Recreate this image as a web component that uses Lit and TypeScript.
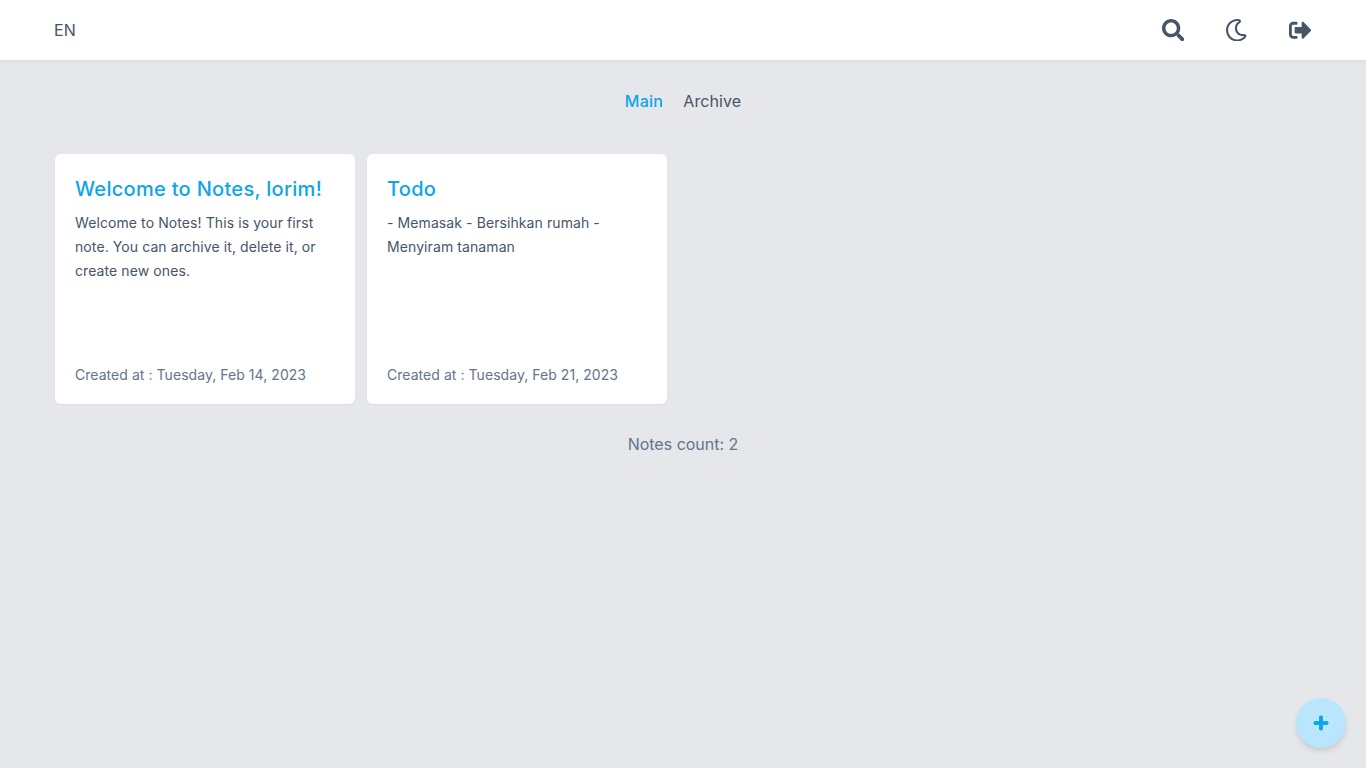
import { LitElement, css, html, svg } from "lit";
import { customElement } from "lit/decorators.js";

const notes = [
  {
    title: "Welcome to Notes, lorim!",
    body: "Welcome to Notes! This is your first note. You can archive it, delete it, or create new ones.",
    date: "Created at : Tuesday, Feb 14, 2023",
  },
  {
    title: "Todo",
    body: "- Memasak - Bersihkan rumah - Menyiram tanaman",
    date: "Created at : Tuesday, Feb 21, 2023",
  },
];

const searchIcon = svg`<path d="M505 442.7L405.3 343c-4.5-4.5-10.6-7-17-7H372c27.6-35.3 44-79.7 44-128C416 93.1 322.9 0 208 0S0 93.1 0 208s93.1 208 208 208c48.3 0 92.7-16.4 128-44v16.3c0 6.4 2.5 12.5 7 17l99.7 99.7c9.4 9.4 24.6 9.4 33.9 0l28.3-28.3c9.4-9.4 9.4-24.6.1-34zM208 336c-70.7 0-128-57.2-128-128 0-70.7 57.2-128 128-128 70.7 0 128 57.2 128 128 0 70.7-57.2 128-128 128z"/>`;
const moonIcon = svg`<path d="M279.1 512c78.8 0 151-35.8 198.8-94.8 28.3-34.8-2.6-85.7-46.2-77.4-82.4 15.7-158.3-47.3-158.3-130.8 0-48.4 26.1-92.3 67.4-115.8 38.8-22.1 29-80.8-15-88.9A258 258 0 0 0 279.1 0c-141.4 0-256 114.6-256 256 0 141.4 114.6 256 256 256zm0-464c13 0 25.7 1.2 38 3.5-54.8 31.2-91.7 90-91.7 157.5 0 113.9 103.7 199.2 215.3 178C402.6 434 344.4 464 279.1 464c-114.9 0-208-93.1-208-208s93.1-208 208-208z"/>`;
const signOutIcon = svg`<path d="M497 273L329 441c-15 15-41 4.5-41-17v-96H152c-13.3 0-24-10.7-24-24v-96c0-13.3 10.7-24 24-24h136V88c0-21.4 25.9-32 41-17l168 168c9.3 9.4 9.3 24.6 0 34zM192 436v-40c0-6.6-5.4-12-12-12H96c-17.7 0-32-14.3-32-32V160c0-17.7 14.3-32 32-32h84c6.6 0 12-5.4 12-12V76c0-6.6-5.4-12-12-12H96c-53 0-96 43-96 96v192c0 53 43 96 96 96h84c6.6 0 12-5.4 12-12z"/>`;
const plusIcon = svg`<path d="M416 208H272V64c0-17.67-14.33-32-32-32h-32c-17.67 0-32 14.33-32 32v144H32c-17.67 0-32 14.33-32 32v32c0 17.67 14.33 32 32 32h144v144c0 17.67 14.33 32 32 32h32c17.67 0 32-14.33 32-32V304h144c17.67 0 32-14.33 32-32v-32c0-17.67-14.33-32-32-32z"/>`;

@customElement("app-root")
export class AppRoot extends LitElement {
  static styles = css`
    :host {
      display: block;
      position: relative;
      min-height: 100vh;
      background: #e5e7eb;
      color: #475569;
      font-family: Inter, "Noto Sans", sans-serif;
    }

    .header {
      display: flex;
      align-items: center;
      justify-content: space-between;
      height: 60px;
      padding: 0 54px;
      background: #fff;
      box-shadow: 0 1px 4px rgba(0, 0, 0, 0.06);
    }

    .lang {
      font-size: 16px;
      letter-spacing: 0.2px;
    }

    .actions {
      display: flex;
      align-items: center;
      gap: 41px;
      padding-right: 1px;
    }

    .actions svg {
      display: block;
      width: 22.5px;
      height: 22.5px;
      fill: currentColor;
    }

    .tabs {
      display: flex;
      justify-content: center;
      gap: 20px;
      padding-top: 31px;
      font-size: 16px;
      line-height: 20px;
      letter-spacing: 0.1px;
    }

    .tabs .active {
      color: #0ea5e9;
      font-weight: 500;
      letter-spacing: 0.3px;
    }

    .notes {
      display: flex;
      flex-wrap: wrap;
      gap: 12px;
      padding: 43px 55px 0;
    }

    .note {
      display: flex;
      flex-direction: column;
      box-sizing: border-box;
      width: 300px;
      height: 250px;
      padding: 20px;
      background: #fff;
      border-radius: 6px;
      box-shadow: 0 1px 2px rgba(0, 0, 0, 0.05);
    }

    .note h2 {
      margin: 0 0 7px;
      color: #0ea5e9;
      font-size: 20px;
      font-weight: 500;
      line-height: 30px;
      letter-spacing: 0.3px;
    }

    .note p {
      flex: 1;
      margin: 0;
      font-size: 14px;
      line-height: 24px;
      letter-spacing: 0.09px;
    }

    .note .date {
      color: #64748b;
      font-size: 14px;
      line-height: 20px;
      margin-bottom: -1px;
      letter-spacing: 0.05px;
    }

    .count {
      padding-top: 30px;
      color: #64748b;
      font-size: 16px;
      line-height: 20px;
      text-align: center;
    }

    .fab {
      position: absolute;
      right: 20px;
      bottom: 20px;
      display: flex;
      align-items: center;
      justify-content: center;
      width: 50px;
      height: 50px;
      border-radius: 50%;
      background: #bae6fd;
      color: #0ea5e9;
      box-shadow: 0 4px 6px -1px rgba(0, 0, 0, 0.1), 0 2px 4px -1px rgba(0, 0, 0, 0.06);
    }

    .fab svg {
      width: 16px;
      height: 16px;
      fill: currentColor;
      stroke: currentColor;
      stroke-width: 30;
    }
  `;

  render() {
    return html`
      <header class="header">
        <span class="lang">EN</span>
        <div class="actions">
          <svg viewBox="0 0 512 512">${searchIcon}</svg>
          <svg viewBox="0 0 512 512">${moonIcon}</svg>
          <svg viewBox="0 0 512 512">${signOutIcon}</svg>
        </div>
      </header>
      <nav class="tabs">
        <span class="active">Main</span>
        <span>Archive</span>
      </nav>
      <section class="notes">
        ${notes.map(
          (n) => html`
            <article class="note">
              <h2>${n.title}</h2>
              <p>${n.body}</p>
              <div class="date">${n.date}</div>
            </article>
          `
        )}
      </section>
      <div class="count">Notes count: 2</div>
      <div class="fab"><svg viewBox="0 0 448 512">${plusIcon}</svg></div>
    `;
  }
}
